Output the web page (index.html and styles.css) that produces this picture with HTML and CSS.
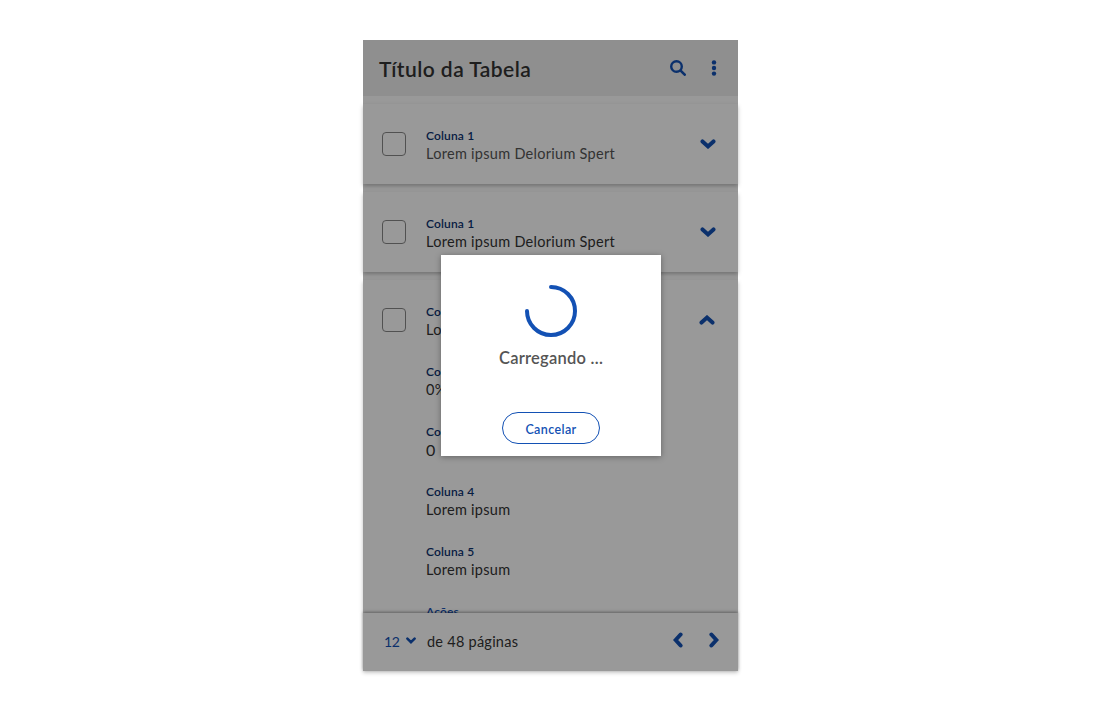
FILE: index.html
```html
<!DOCTYPE html>
<html lang="pt-BR">
<head>
<meta charset="utf-8">
<title>Título da Tabela</title>
<link rel="stylesheet" href="styles.css">
</head>
<body>
<main class="table">
  <header class="header">
    <h1 class="title">Título da Tabela</h1>
    <svg class="icon" width="16" height="16" viewBox="0 0 16 16"><circle cx="6.5" cy="6.5" r="5.3" fill="none" stroke="currentColor" stroke-width="2.4"/><path class="handle" d="M10.6 10.6L14.7 14.7"/></svg>
    <svg class="icon dots" width="6" height="16" viewBox="0 0 6 16" fill="currentColor"><circle cx="3" cy="2.4" r="2.2"/><circle cx="3" cy="8" r="2.2"/><circle cx="3" cy="13.6" r="2.2"/></svg>
  </header>
  <section class="card muted">
    <span class="checkbox"></span>
    <div class="fields"><div class="field"><b class="label">Coluna 1</b><span class="value">Lorem ipsum Delorium Spert</span></div></div>
    <svg class="icon chevron" width="16" height="10" viewBox="0 0 16 10"><path d="M2.5 2.4L8 7.4L13.5 2.4"/></svg>
  </section>
  <section class="card">
    <span class="checkbox"></span>
    <div class="fields"><div class="field"><b class="label">Coluna 1</b><span class="value">Lorem ipsum Delorium Spert</span></div></div>
    <svg class="icon chevron" width="16" height="10" viewBox="0 0 16 10"><path d="M2.5 2.4L8 7.4L13.5 2.4"/></svg>
  </section>
  <section class="card open">
    <span class="checkbox"></span>
    <div class="fields">
      <div class="field"><b class="label">Coluna 1</b><span class="value">Lorem ipsum</span></div>
      <div class="field"><b class="label">Coluna 2</b><span class="value">0%</span></div>
      <div class="field"><b class="label">Coluna 3</b><span class="value zero">0</span></div>
      <div class="field"><b class="label">Coluna 4</b><span class="value">Lorem ipsum</span></div>
      <div class="field"><b class="label">Coluna 5</b><span class="value">Lorem ipsum</span></div>
      <div class="field"><b class="label actions">Ações</b></div>
    </div>
    <svg class="icon chevron up" width="16" height="10" viewBox="0 0 16 10"><path d="M2.5 7.6L8 2.6L13.5 7.6"/></svg>
  </section>
  <footer class="footer">
    <span class="page">12</span>
    <svg class="icon caret" width="10" height="7" viewBox="0 0 10 7"><path d="M1.4 1.6L5 5.1L8.6 1.6"/></svg>
    <span class="total">de 48 páginas</span>
    <svg class="icon prev" width="10" height="16" viewBox="0 0 10 16"><path d="M7.6 2.5L2.6 8L7.6 13.5"/></svg>
    <svg class="icon next" width="10" height="16" viewBox="0 0 10 16"><path d="M2.4 2.5L7.4 8L2.4 13.5"/></svg>
  </footer>
  <div class="scrim">
    <div class="modal">
      <svg class="spinner" width="52" height="52" viewBox="0 0 52 52"><path d="M26 2A24 24 0 1 1 2 26"/></svg>
      <p class="loading">Carregando ...</p>
      <button class="cancel">Cancelar</button>
    </div>
  </div>
</main>
</body>
</html>
```
FILE: styles.css
```css
* { box-sizing: border-box; }
body {
  margin: 0;
  padding-top: 40px;
  height: 711px;
  overflow: hidden;
  background: #fff;
  color: #333;
  font-family: Lato, "Open Sans", sans-serif;
}
.table {
  position: relative;
  display: flex;
  flex-direction: column;
  gap: 8px;
  width: 375px;
  height: 631px;
  margin-left: 363px;
  background: #fff;
}
.icon { flex: none; color: #1351b4; }
.icon path { fill: none; stroke: currentColor; stroke-width: 4; stroke-linecap: round; }
.icon .handle { stroke-width: 2.6; }
.header {
  display: flex;
  flex: none;
  align-items: center;
  height: 56px;
  padding: 0 21px 0 16px;
  background: #eee;
}
.title {
  flex: 1;
  margin: 2px 0 0;
  font-size: 21px;
  line-height: 28px;
  font-weight: 600;
  letter-spacing: .45px;
}
.dots { margin-left: 25px; }
.card {
  display: flex;
  flex: none;
  align-items: flex-start;
  height: 80px;
  padding: 23px 22px 0 19px;
  background: #fff;
  box-shadow: 0 2px 4px rgba(0, 0, 0, .26);
}
.card.open { height: 333px; overflow: hidden; }
.checkbox {
  flex: none;
  width: 24px;
  height: 24px;
  margin: 5px 20px 0 0;
  border: 1px solid #888;
  border-radius: 4px;
}
.fields { flex: 1; display: grid; gap: 24px; }
.field { display: grid; grid-template-rows: 18px 18px; line-height: 18px; white-space: nowrap; }
.label { color: #0c326f; font-size: 12px; font-weight: 600; letter-spacing: .15px; }
.actions { color: #1351b4; }
.value { font-size: 14.5px; letter-spacing: .28px; }
.zero { font-size: 16px; }
.muted .value { color: #555; }
.chevron { margin-top: 12px; }
.up { margin-right: 1px; }
.footer {
  z-index: 1;
  display: flex;
  flex: none;
  align-items: center;
  height: 58px;
  margin-top: -8px;
  padding: 0 19px 0 21px;
  background: #fff;
  box-shadow: 0 -1px 3px rgba(0, 0, 0, .35), 0 2px 4px rgba(0, 0, 0, .2);
  font-size: 14.5px;
}
.page { width: 15px; color: #1351b4; font-size: 14px; letter-spacing: -.4px; }
.caret { margin: -4px 11px 0 7px; }
.icon.caret path { stroke-width: 2.6; }
.total { flex: 1; letter-spacing: .25px; }
.page, .total { margin-top: -1px; }
.prev, .next { margin-top: -5px; }
.next { margin-left: 26px; }
.scrim {
  position: absolute;
  inset: 0;
  z-index: 2;
  padding: 215px 77px 0 78px;
  background: rgba(0, 0, 0, .4);
}
.modal {
  display: flex;
  flex-direction: column;
  align-items: center;
  height: 201px;
  padding-top: 30px;
  background: #fff;
  box-shadow: 0 1px 6px rgba(0, 0, 0, .35);
}
.spinner { margin-right: 1px; }
.spinner path { fill: none; stroke: #1351b4; stroke-width: 4; stroke-linecap: round; }
.loading {
  margin: 9px 0 42px;
  color: #555;
  font-size: 16.5px;
  line-height: 24px;
  font-weight: 600;
  letter-spacing: .25px;
}
.cancel {
  width: 98px;
  height: 32px;
  padding: 3px 0 0;
  border: 1px solid #1351b4;
  border-radius: 16px;
  background: #fff;
  color: #1351b4;
  font: 600 12.5px Lato, sans-serif;
  letter-spacing: .4px;
}
```
